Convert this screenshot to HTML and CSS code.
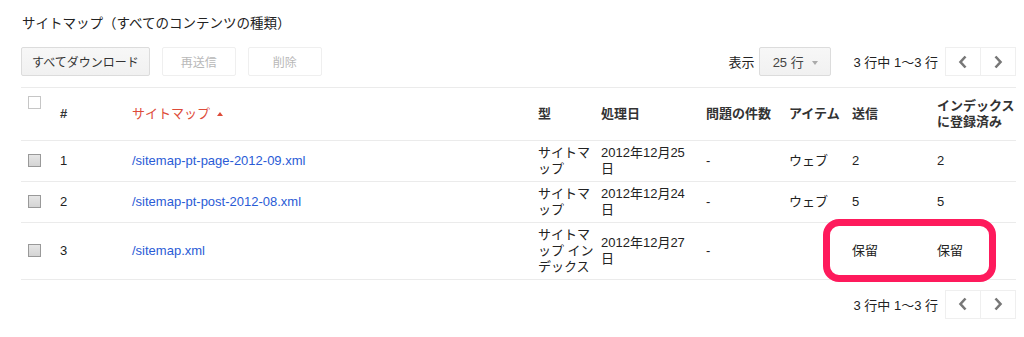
FILE: index.html
```html
<!doctype html>
<html lang="ja">
<head>
<meta charset="UTF-8">
<title>サイトマップ</title>
<link rel="stylesheet" href="styles.css">
</head>
<body>
	<div id="sitemaps">
		<h2>サイトマップ（すべてのコンテンツの種類）</h2>

		<div class="toolbar">
			<div class="actions">
				<button class="btn">すべてダウンロード</button>
				<button class="btn off">再送信</button>
				<button class="btn off">削除</button>
			</div>
			<div class="paging">
				<span class="label">表示</span>
				<button class="btn select">25 行 <span class="caret"></span></button>
				<span class="count">3 行中 1～3 行</span>
				<div class="pager">
					<button class="page"><svg width="12" height="14" viewBox="0 0 12 14"><path d="M8.5 1.5 L3.5 7 L8.5 12.5" fill="none" stroke="#777" stroke-width="2.6"/></svg></button>
					<button class="page"><svg width="12" height="14" viewBox="0 0 12 14"><path d="M3.5 1.5 L8.5 7 L3.5 12.5" fill="none" stroke="#777" stroke-width="2.6"/></svg></button>
				</div>
			</div>
		</div>

		<div class="tablewrap">
			<table class="list">
				<colgroup>
					<col style="width:34px"><col style="width:72px"><col style="width:406px"><col style="width:63px"><col style="width:105px"><col style="width:83px"><col style="width:63px"><col style="width:85px"><col style="width:84px">
				</colgroup>
				<thead>
					<tr>
						<th class="chk top"><span class="box blank"></span></th>
						<th>#</th>
						<th class="sorted">サイトマップ <span class="up"></span></th>
						<th>型</th>
						<th>処理日</th>
						<th>問題の件数</th>
						<th>アイテム</th>
						<th>送信</th>
						<th>インデックスに登録済み</th>
					</tr>
				</thead>
				<tbody>
					<tr>
						<td class="chk"><span class="box"></span></td>
						<td>1</td>
						<td><a href="#">/sitemap-pt-page-2012-09.xml</a></td>
						<td>サイトマップ</td>
						<td class="date">2012年12月25日</td>
						<td>-</td>
						<td>ウェブ</td>
						<td>2</td>
						<td>2</td>
					</tr>
					<tr>
						<td class="chk"><span class="box"></span></td>
						<td>2</td>
						<td><a href="#">/sitemap-pt-post-2012-08.xml</a></td>
						<td>サイトマップ</td>
						<td class="date">2012年12月24日</td>
						<td>-</td>
						<td>ウェブ</td>
						<td>5</td>
						<td>5</td>
					</tr>
					<tr>
						<td class="chk"><span class="box"></span></td>
						<td>3</td>
						<td><a href="#">/sitemap.xml</a></td>
						<td>サイトマップ インデックス</td>
						<td class="date">2012年12月27日</td>
						<td>-</td>
						<td></td>
						<td>保留</td>
						<td>保留</td>
					</tr>
				</tbody>
			</table>
			<div class="mark"></div>
		</div>

		<div class="footer">
			<span class="count">3 行中 1～3 行</span>
			<div class="pager">
				<button class="page"><svg width="12" height="14" viewBox="0 0 12 14"><path d="M8.5 1.5 L3.5 7 L8.5 12.5" fill="none" stroke="#777" stroke-width="2.6"/></svg></button>
				<button class="page"><svg width="12" height="14" viewBox="0 0 12 14"><path d="M3.5 1.5 L8.5 7 L3.5 12.5" fill="none" stroke="#777" stroke-width="2.6"/></svg></button>
			</div>
		</div>
	</div>
</body>
</html>
```

FILE: styles.css
```css
*{
	box-sizing: border-box;
}
body{
	margin: 0;
	background-color: white;
	color: #222;
	font-family: "Liberation Sans", "Noto Sans CJK JP", sans-serif;
	font-size: 13px;
}

#sitemaps{
	padding: 14px 8px 0 21px;
}

h2{
	margin: 0 0 0 1px;
	font-size: 13.5px;
	font-weight: normal;
	line-height: 20px;
	color: #222;
}

.toolbar{
	display: flex;
	justify-content: space-between;
	align-items: center;
	margin-top: 13px;
	padding-bottom: 11px;
	border-bottom: 1px solid #ebebeb;
}
.actions{
	display: flex;
	gap: 12px;
}
.paging{
	display: flex;
	align-items: center;
}

.btn{
	height: 29px;
	padding: 0 10px;
	font: inherit;
	font-size: 12px;
	color: #333;
	background: linear-gradient(#f7f7f7, #f1f1f1);
	border: 1px solid #dcdcdc;
	border-radius: 2px;
}
.btn.off{
	width: 74px;
	color: #b8b8b8;
	background: white;
	border-color: #efefef;
}
.btn.select{
	width: 72px;
	margin-left: 5px;
	font-size: 13px;
	color: #444;
}
.caret{
	display: inline-block;
	margin-left: 5px;
	vertical-align: 2px;
	border-left: 3px solid transparent;
	border-right: 3px solid transparent;
	border-top: 4px solid #aaa;
}
.label{
	color: #222;
}
.count{
	margin: 0 7px 0 22px;
	color: #222;
}

.pager{
	display: flex;
}
.page{
	width: 36px;
	height: 29px;
	padding: 0;
	display: flex;
	align-items: center;
	justify-content: center;
	background: white;
	border: 1px solid #efefef;
}
.page + .page{
	margin-left: -1px;
}

.tablewrap{
	position: relative;
}
.list{
	width: 995px;
	table-layout: fixed;
	border-collapse: collapse;
}
.list th, .list td{
	padding: 4px 0 4px 5px;
	text-align: left;
	vertical-align: middle;
	line-height: 16px;
	border-bottom: 1px solid #ebebeb;
}
.list th{
	height: 52px;
	font-weight: bold;
	color: #333;
}
.list th.top{
	vertical-align: top;
	padding-top: 8px;
}
.list .chk{
	padding-left: 7px;
}
.list td.date{
	padding-right: 14px;
}
.list a{
	color: #2a5bd6;
	text-decoration: none;
}
.list th.sorted{
	color: #dd4b39;
	font-weight: normal;
}
.up{
	display: inline-block;
	margin-left: 3px;
	vertical-align: 2px;
	border-left: 3px solid transparent;
	border-right: 3px solid transparent;
	border-bottom: 4px solid #dd4b39;
}

.box{
	display: block;
	width: 13px;
	height: 13px;
	border: 1px solid #999;
	background: linear-gradient(#e6e6e6, #d4d4d4);
}
.box.blank{
	border-color: #c6c6c6;
	background: white;
}

.mark{
	position: absolute;
	left: 802px;
	top: 131px;
	width: 173px;
	height: 63px;
	border: 7px solid #fe1a5c;
	border-radius: 16px;
}

.footer{
	display: flex;
	justify-content: flex-end;
	align-items: center;
	margin-top: 10px;
}
```
